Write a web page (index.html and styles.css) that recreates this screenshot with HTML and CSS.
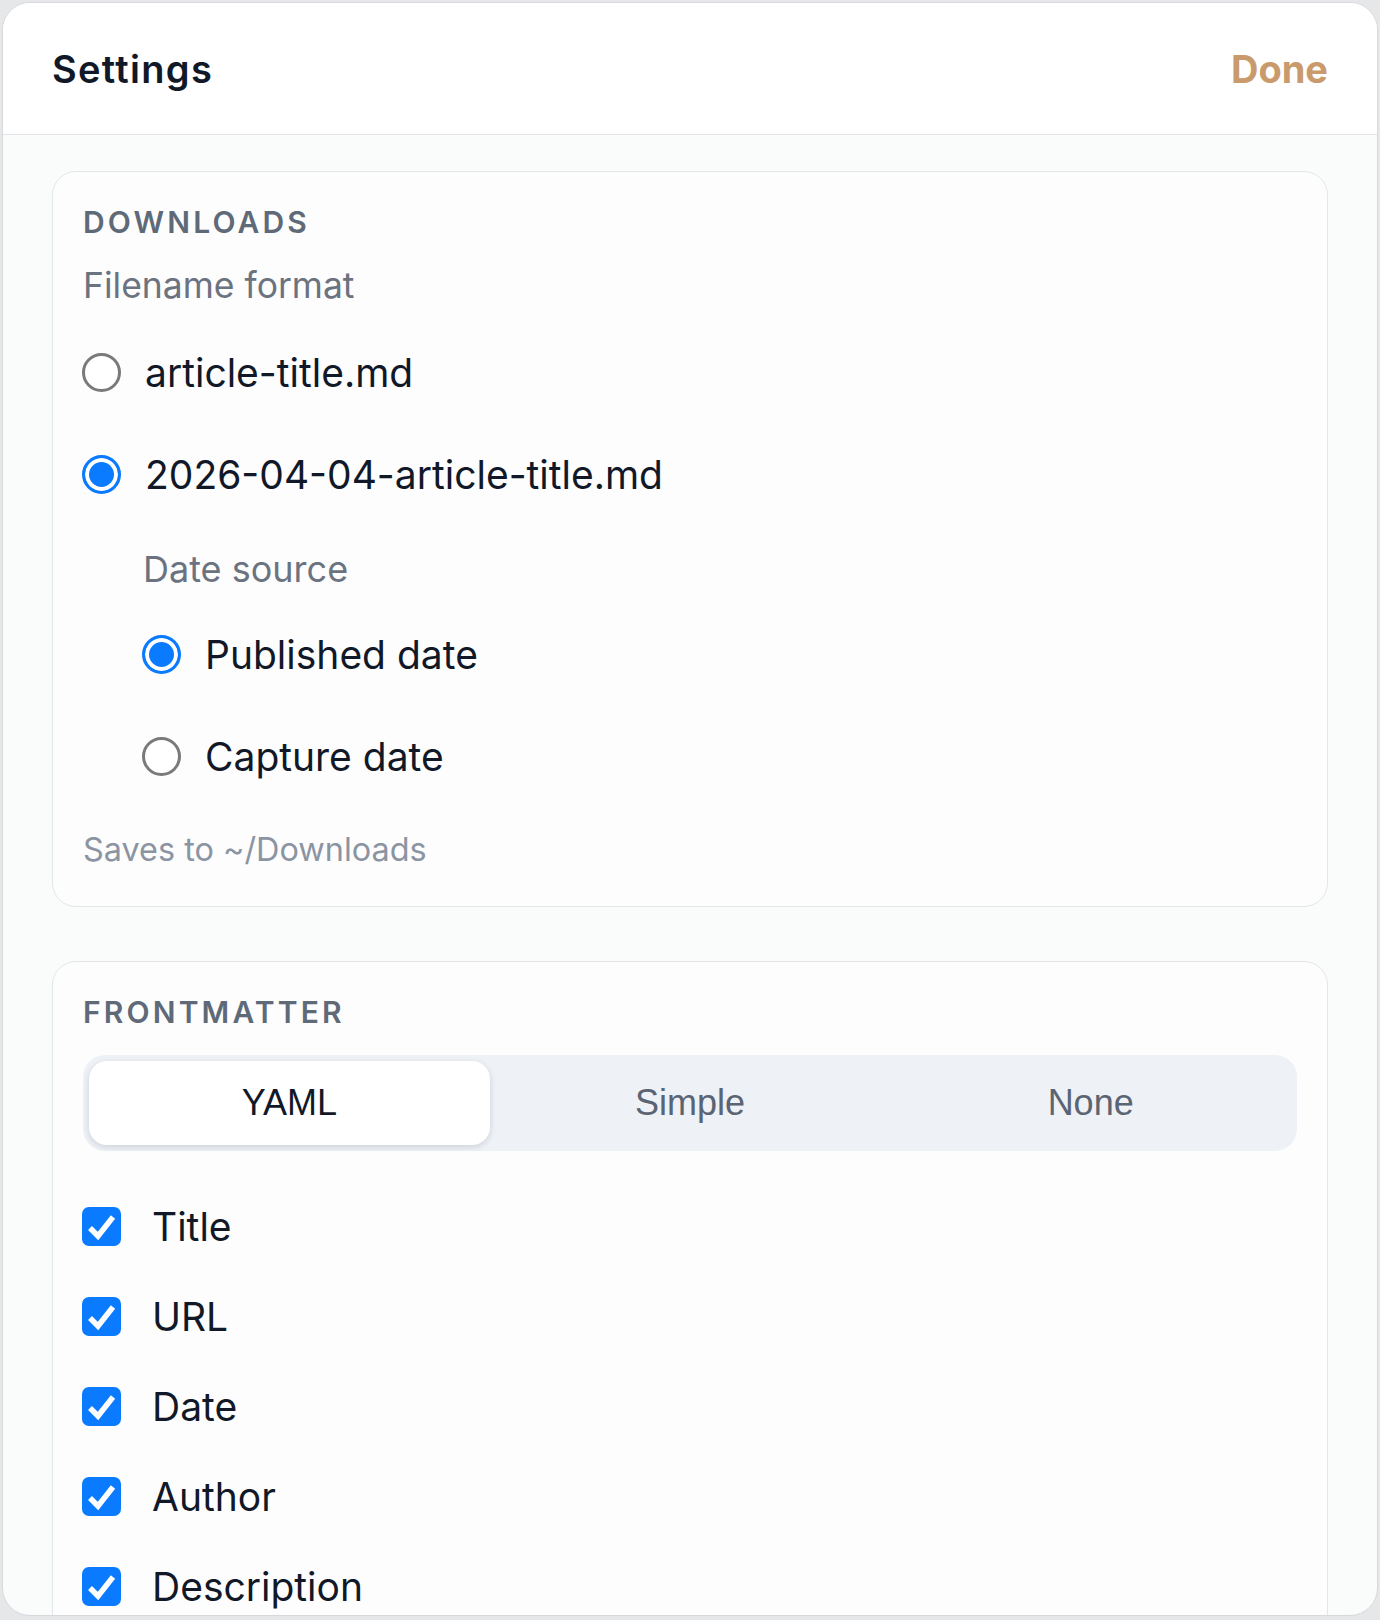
FILE: index.html
```html
<!DOCTYPE html>
<html lang="en">
<head>
    <meta charset="UTF-8">
    <meta name="viewport" content="width=device-width, initial-scale=1.0">
    <title>Settings</title>
    <link rel="stylesheet" href="styles.css">
</head>
<body>
    <div class="sheet">
        <header class="sheet-header">
            <h1>Settings</h1>
            <button class="done">Done</button>
        </header>

        <main class="sheet-body">
            <section class="card">
                <h2 class="card-title">Downloads</h2>
                <p class="field-label">Filename format</p>
                <label class="radio-row">
                    <input type="radio" name="filename">
                    <span>article-title.md</span>
                </label>
                <label class="radio-row">
                    <input type="radio" name="filename" checked>
                    <span>2026-04-04-article-title.md</span>
                </label>

                <div class="nested">
                    <p class="field-label">Date source</p>
                    <label class="radio-row">
                        <input type="radio" name="datesource" checked>
                        <span>Published date</span>
                    </label>
                    <label class="radio-row">
                        <input type="radio" name="datesource">
                        <span>Capture date</span>
                    </label>
                </div>

                <p class="hint">Saves to ~/Downloads</p>
            </section>

            <section class="card">
                <h2 class="card-title">Frontmatter</h2>
                <div class="segmented">
                    <button class="active">YAML</button>
                    <button>Simple</button>
                    <button>None</button>
                </div>

                <label class="check-row">
                    <span class="check"><svg viewBox="0 0 39 39"><path d="M8 21 L16 29 L31 10"/></svg></span>
                    <span>Title</span>
                </label>
                <label class="check-row">
                    <span class="check"><svg viewBox="0 0 39 39"><path d="M8 21 L16 29 L31 10"/></svg></span>
                    <span>URL</span>
                </label>
                <label class="check-row">
                    <span class="check"><svg viewBox="0 0 39 39"><path d="M8 21 L16 29 L31 10"/></svg></span>
                    <span>Date</span>
                </label>
                <label class="check-row">
                    <span class="check"><svg viewBox="0 0 39 39"><path d="M8 21 L16 29 L31 10"/></svg></span>
                    <span>Author</span>
                </label>
                <label class="check-row">
                    <span class="check"><svg viewBox="0 0 39 39"><path d="M8 21 L16 29 L31 10"/></svg></span>
                    <span>Description</span>
                </label>
            </section>
        </main>
    </div>
</body>
</html>
```

FILE: styles.css
```css
* {
    box-sizing: border-box;
}
body {
    margin: 0;
    padding: 2px;
    background: #e6e7e9;
    font-family: Inter, "Noto Sans", sans-serif;
    color: #111827;
}
.sheet {
    height: 1614px;
    overflow: hidden;
    background: #fafbfb;
    border: 1px solid #d6d8dc;
    border-radius: 28px;
}

/* top bar */
.sheet-header {
    display: flex;
    align-items: center;
    justify-content: space-between;
    height: 132px;
    padding: 0 49px;
    background: #fff;
    border-bottom: 1px solid #e1e4e8;
}
.sheet-header h1 {
    margin: 0;
    font-size: 38px;
    font-weight: 600;
    line-height: 46px;
    letter-spacing: 1.3px;
}
.done {
    padding: 0;
    border: none;
    background: none;
    font-family: inherit;
    font-size: 38px;
    font-weight: 700;
    line-height: 46px;
    color: #c99b6c;
    cursor: pointer;
}

.sheet-body {
    display: flex;
    flex-direction: column;
    gap: 54px;
    padding: 36px 49px;
}
.card {
    background: #fdfdfd;
    border: 1px solid #e3e6ea;
    border-radius: 24px;
    padding: 31px 30px 36px;
}
.card-title {
    margin: 0;
    font-size: 30px;
    font-weight: 600;
    line-height: 38px;
    letter-spacing: 0.105em;
    text-transform: uppercase;
    color: #5f6a79;
}
.field-label {
    margin: 25px 0 0;
    font-size: 35.5px;
    line-height: 40px;
    color: #6b7280;
}
.hint {
    margin: 23px 0 0;
    font-size: 32.4px;
    line-height: 40px;
    color: #8b94a2;
}

/* radio choices */
.radio-row {
    display: flex;
    align-items: center;
    gap: 24px;
    height: 102px;
    font-size: 39px;
    cursor: pointer;
}
.field-label + .radio-row {
    margin-top: 15px;
}
.radio-row input {
    appearance: none;
    flex: none;
    width: 39px;
    height: 39px;
    margin: 0 0 0 -1px;
    border: 3.5px solid #7a7a7a;
    border-radius: 50%;
    background: #fff;
}
.radio-row input:checked {
    border-color: #0a7aff;
    background: #0a7aff;
    box-shadow: inset 0 0 0 4px #fff;
}
.nested {
    padding-left: 60px;
}
.nested .field-label {
    margin-top: 24px;
    font-size: 36px;
}
.nested .field-label + .radio-row {
    margin-top: 14px;
}

/* frontmatter format switch */
.segmented {
    display: grid;
    grid-template-columns: repeat(3, 1fr);
    height: 96px;
    margin-top: 24px;
    margin-bottom: 30px;
    padding: 6px;
    background: #eef1f6;
    border-radius: 22px;
}
.segmented button {
    border: none;
    background: transparent;
    border-radius: 18px;
    font-family: "Liberation Sans", Arial, sans-serif;
    font-size: 36px;
    color: #5b6472;
    cursor: pointer;
}
.segmented button.active {
    background: #fff;
    color: #111827;
    box-shadow: 0 2px 6px rgba(15, 23, 42, 0.14);
}

/* field checkboxes */
.check-row {
    display: flex;
    align-items: center;
    gap: 31px;
    height: 90px;
    font-size: 39px;
    cursor: pointer;
}
.check {
    flex: none;
    width: 39px;
    height: 39px;
    margin-left: -1px;
    border-radius: 7px;
    background: #0a7aff;
}
.check svg {
    display: block;
    width: 39px;
    height: 39px;
    fill: none;
    stroke: #fff;
    stroke-width: 5.5;
}
```
